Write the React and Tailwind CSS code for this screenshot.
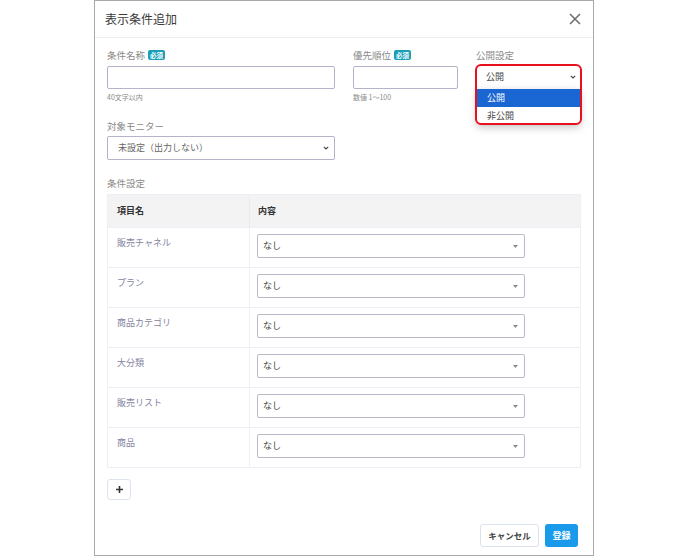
import React from "react";

const font = { fontFamily: '"Noto Sans CJK JP", "Noto Sans", sans-serif' };

const rows = ["販売チャネル", "プラン", "商品カテゴリ", "大分類", "販売リスト", "商品"];

const labelClass = "h-[12px] leading-[12px] text-[9.5px] text-[#8a8a8a] flex items-center gap-[3px]";

function Required() {
	return (
		<span className="inline-flex items-center h-[10px] px-[2px] rounded-[2px] bg-[#1b9fb8] text-white text-[6.5px] font-bold leading-none">
			必須
		</span>
	);
}

function Chevron() {
	return (
		<svg width="6" height="4" viewBox="0 0 6 4">
			<path d="M0.8 0.8l2.2 2.2 2.2-2.2" stroke="#444" strokeWidth="1.1" fill="none" />
		</svg>
	);
}

export default function App() {
	return (
		<div className="w-[688px] h-[557px] bg-white overflow-hidden" style={font}>
			<div className="ml-[94px] w-[500px] h-[556px] border border-[#a9a9a9] bg-white flex flex-col">
				{/* header */}
				<div className="h-[37px] shrink-0 border-b border-[#ececec] flex items-center justify-between pl-[10px] pr-[12px]">
					<span className="text-[12px] text-[#3a3a3a]">表示条件追加</span>
					<svg width="12" height="12" viewBox="0 0 12 12">
						<path d="M1 1l10 10M11 1L1 11" stroke="#6b6b6b" strokeWidth="1.5" />
					</svg>
				</div>

				<div className="px-[12px] flex flex-col">
					{/* first row */}
					<div className="mt-[11px] flex gap-[18px]">
						<div className="w-[228px]">
							<div className={labelClass}>
								条件名称 <Required />
							</div>
							<div className="mt-[5px] h-[23px] border border-[#b3b3ca] rounded-[2px]" />
							<div className="mt-[3px] h-[10px] leading-[10px] text-[7px] text-[#8a8a8a]">40文字以内</div>
						</div>
						<div className="w-[105px]">
							<div className={labelClass}>
								優先順位 <Required />
							</div>
							<div className="mt-[5px] h-[23px] border border-[#b3b3ca] rounded-[2px]" />
							<div className="mt-[3px] h-[10px] leading-[10px] text-[7px] text-[#8a8a8a]">数値 1〜100</div>
						</div>
						<div className="relative w-[105px]">
							<div className={labelClass}>公開設定</div>
							<div className="mt-[4px] h-[24px] flex items-center justify-between pl-[10px] pr-[5px] text-[9px] text-[#444]">
								<span>公開</span>
								<Chevron />
							</div>
							<div className="absolute left-[1px] top-[40px] w-[103px] bg-white shadow-[0_3px_8px_rgba(0,0,0,0.25)] text-[9px]">
								<div className="h-[18px] flex items-center pl-[10px] bg-[#1a66d2] text-white">公開</div>
								<div className="h-[17px] flex items-center pl-[10px] text-[#444]">非公開</div>
							</div>
							<div className="absolute left-[-1px] top-[15px] w-[107px] h-[61px] border-2 border-[#e8101c] rounded-[6px]" />
						</div>
					</div>

					{/* monitor */}
					<div className={`mt-[18px] ${labelClass}`}>対象モニター</div>
					<div className="mt-[4px] w-[228px] h-[24px] border border-[#b3b3ca] rounded-[2px] flex items-center justify-between pl-[10px] pr-[5px] text-[9px] text-[#666]">
						<span>未設定（出力しない）</span>
						<Chevron />
					</div>

					<div className={`mt-[17px] ${labelClass}`}>条件設定</div>

					{/* table */}
					<div className="mt-[5px] border border-[#eceff5]">
						<div className="h-[32px] bg-[#f3f3f3] flex text-[9px] font-bold text-[#333]">
							<div className="w-[142px] flex items-center pl-[9px] border-r border-[#e8ebf1]">項目名</div>
							<div className="flex items-center pl-[8px]">内容</div>
						</div>
						{rows.map((r) => (
							<div key={r} className="h-[40px] flex border-t border-[#eceff5]">
								<div className="w-[142px] pl-[9px] pt-[8px] text-[9px] text-[#8484a0] border-r border-[#eceff5]">{r}</div>
								<div className="pl-[7px] pt-[6px]">
									<div className="w-[268px] h-[24px] border border-[#b9b9c9] rounded-[2px] flex items-center justify-between pl-[5px] pr-[6px] text-[9px] text-[#444]">
										<span>なし</span>
										<svg width="5" height="3" viewBox="0 0 5 3">
											<path d="M0 0h5L2.5 3z" fill="#888" />
										</svg>
									</div>
								</div>
							</div>
						))}
					</div>

					<div className="mt-[11px] w-[24px] h-[21px] border border-[#dde4ef] rounded-[3px] flex items-center justify-center">
						<svg width="7" height="7" viewBox="0 0 7 7">
							<path d="M3.5 0v7M0 3.5h7" stroke="#333" strokeWidth="1.6" />
						</svg>
					</div>

					<div className="mt-[24px] flex justify-end gap-[6px] pr-[3px]">
						<div className="w-[59px] h-[23px] border border-[#dbe3ee] rounded-[3px] flex items-center justify-center text-[8.5px] font-bold text-[#444]">
							キャンセル
						</div>
						<div className="w-[33px] h-[23px] rounded-[3px] bg-[#1a9aea] flex items-center justify-center text-[9px] font-bold text-white">
							登録
						</div>
					</div>
				</div>
			</div>
		</div>
	);
}
